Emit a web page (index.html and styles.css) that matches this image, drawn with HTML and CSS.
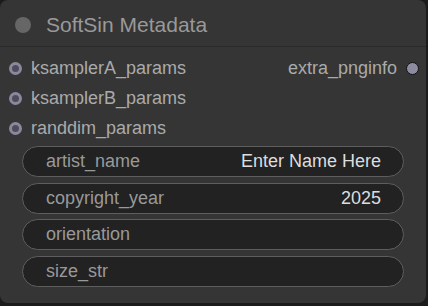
FILE: index.html
```html
<!DOCTYPE html>
<html lang="en">
<head>
  <meta charset="UTF-8" />
  <title>SoftSin Metadata</title>
  <link rel="stylesheet" href="styles.css">
</head>
<body>
  <div class="node">
    <header class="node-title">
      <span class="title-dot"></span>
      <h1>SoftSin Metadata</h1>
    </header>

    <section class="slots">
      <div class="slot-row">
        <div class="slot slot-in"><span class="dot-in"></span>ksamplerA_params</div>
        <div class="slot slot-out">extra_pnginfo<span class="dot-out"></span></div>
      </div>
      <div class="slot-row">
        <div class="slot slot-in"><span class="dot-in"></span>ksamplerB_params</div>
      </div>
      <div class="slot-row">
        <div class="slot slot-in"><span class="dot-in"></span>randdim_params</div>
      </div>
    </section>

    <section class="widgets">
      <div class="widget">
        <span class="label">artist_name</span>
        <span class="value">Enter Name Here</span>
      </div>
      <div class="widget">
        <span class="label">copyright_year</span>
        <span class="value">2025</span>
      </div>
      <div class="widget">
        <span class="label">orientation</span>
        <span class="value"></span>
      </div>
      <div class="widget">
        <span class="label">size_str</span>
        <span class="value"></span>
      </div>
    </section>
  </div>
</body>
</html>
```

FILE: styles.css
```css
* {
  box-sizing: border-box;
}

body {
  margin: 0;
  background: #1b1b1b;
  font-family: 'Liberation Sans', Arial, sans-serif;
  width: 428px;
  height: 306px;
  overflow: hidden;
}

.node {
  width: 426px;
  height: 303px;
  background: #353535;
  border-radius: 8px;
}

.node-title {
  height: 47px;
  display: flex;
  align-items: center;
  padding: 3px 0 0 15px;
  border-bottom: 1px solid #2a2a2a;
}

.title-dot {
  width: 16px;
  height: 16px;
  border-radius: 50%;
  background: #666;
}

.node-title h1 {
  margin: 0 0 0 15px;
  font-size: 21px;
  font-weight: normal;
  color: #999;
}

.slots {
  padding-top: 6px;
}

.slot-row {
  height: 30px;
  display: flex;
  justify-content: space-between;
  align-items: center;
}

.slot {
  display: flex;
  align-items: center;
  font-size: 18px;
  color: #aaa;
}

.slot-in {
  padding-left: 9px;
}

.dot-in {
  width: 13px;
  height: 13px;
  border-radius: 50%;
  border: 3.5px solid #8a889e;
  background: #4e4c59;
  margin-right: 9px;
}

.slot-out {
  padding-right: 7px;
}

.dot-out {
  width: 13px;
  height: 13px;
  border-radius: 50%;
  background: #8d8ba1;
  border: 1px solid #111;
  margin-left: 9px;
}

.widgets {
  padding: 3px 22px 0 22px;
  display: flex;
  flex-direction: column;
  gap: 5.5px;
}

.widget {
  height: 31px;
  border: 1px solid #5e5e5e;
  border-radius: 16px;
  background: #222;
  display: flex;
  justify-content: space-between;
  align-items: center;
  padding: 0 22px 0 23px;
  font-size: 18px;
}

.label {
  color: #999;
}

.value {
  color: #ddd;
}
```
